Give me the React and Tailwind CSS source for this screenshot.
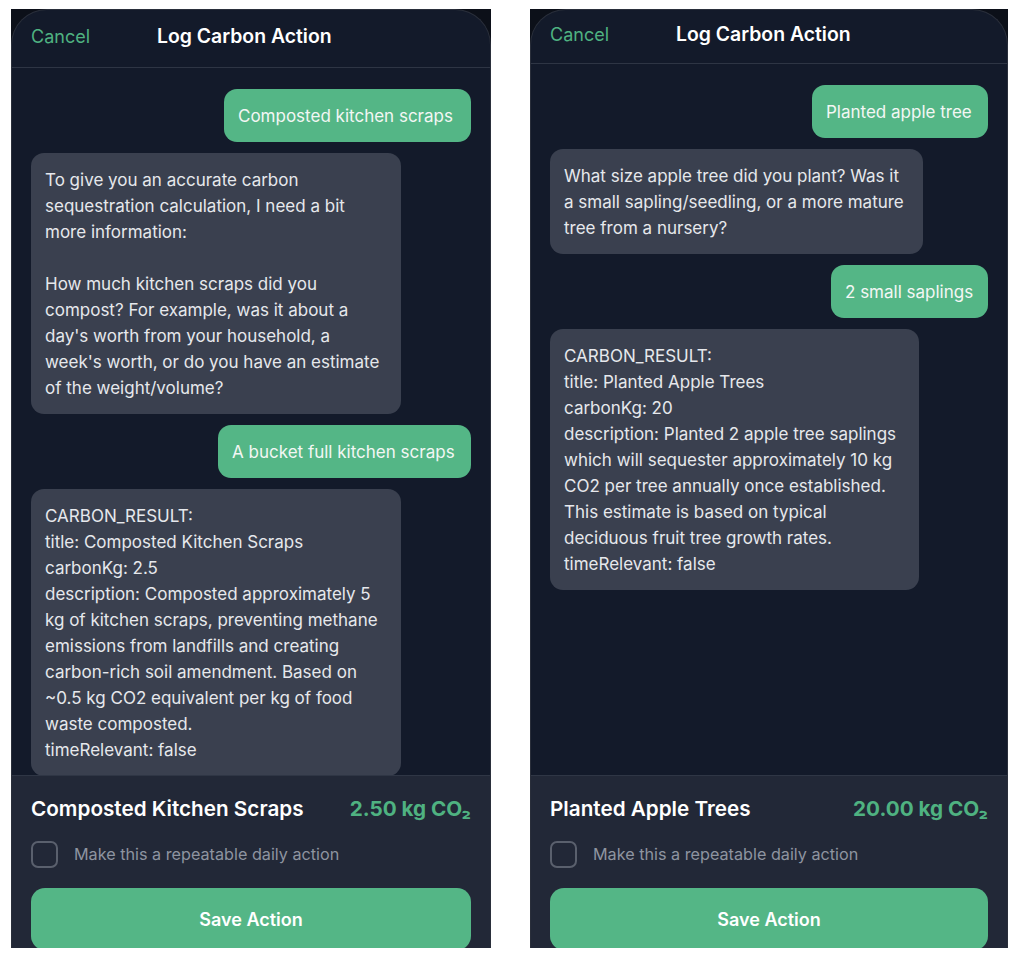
import React from "react";

const panels = [
  {
    width: "w-[480px]",
    headerH: "h-[58px]",
    actionTitle: "Composted Kitchen Scraps",
    carbon: "2.50",
    messages: [
      { from: "user", w: "w-[247px]", text: "Composted kitchen scraps" },
      {
        from: "bot",
        w: "w-[370px]",
        text:
          "To give you an accurate carbon\nsequestration calculation, I need a bit\nmore information:\n\nHow much kitchen scraps did you\ncompost? For example, was it about a\nday's worth from your household, a\nweek's worth, or do you have an estimate\nof the weight/volume?",
      },
      { from: "user", w: "w-[253px]", text: "A bucket full kitchen scraps" },
      {
        from: "bot",
        w: "w-[370px]",
        text:
          "CARBON_RESULT:\ntitle: Composted Kitchen Scraps\ncarbonKg: 2.5\ndescription: Composted approximately 5\nkg of kitchen scraps, preventing methane\nemissions from landfills and creating\ncarbon-rich soil amendment. Based on\n~0.5 kg CO2 equivalent per kg of food\nwaste composted.\ntimeRelevant: false",
      },
    ],
  },
  {
    width: "w-[478px]",
    headerH: "h-[54px]",
    actionTitle: "Planted Apple Trees",
    carbon: "20.00",
    messages: [
      { from: "user", w: "w-[176px]", text: "Planted apple tree" },
      {
        from: "bot",
        w: "w-[373px]",
        text:
          "What size apple tree did you plant? Was it\na small sapling/seedling, or a more mature\ntree from a nursery?",
      },
      { from: "user", w: "w-[157px]", text: "2 small saplings" },
      {
        from: "bot",
        w: "w-[369px]",
        text:
          "CARBON_RESULT:\ntitle: Planted Apple Trees\ncarbonKg: 20\ndescription: Planted 2 apple tree saplings\nwhich will sequester approximately 10 kg\nCO2 per tree annually once established.\nThis estimate is based on typical\ndeciduous fruit tree growth rates.\ntimeRelevant: false",
      },
    ],
  },
];

const Bubble = ({ msg }) => {
  const isUser = msg.from === "user";
  return (
    <div
      className={`${msg.w} shrink-0 rounded-[13px] pl-[14px] pr-[10px] pt-[14px] pb-[13px] text-[17px] leading-[26px] whitespace-pre-line ${
        isUser
          ? "self-end bg-[#54b686] text-[#f3f6f4]"
          : "self-start bg-[#3a404f] text-[#e6e8ec]"
      }`}
    >
      {msg.text}
    </div>
  );
};

const Panel = ({ p }) => {
  return (
    <div className={`${p.width} h-[939px] shrink-0 bg-[#0c1019]`}>
      <div className="h-full flex flex-col rounded-t-[36px] border border-b-0 border-[#2a2f3b] bg-[#131a2a] overflow-hidden">
        {/* header */}
        <div
          className={`${p.headerH} shrink-0 flex items-center gap-[67px] px-[19px] pb-[4px] border-b border-[#2e3544]`}
        >
          <span className="text-[18px] text-[#4fb281]">Cancel</span>
          <span className="text-[19.4px] font-semibold text-white">
            Log Carbon Action
          </span>
        </div>

        {/* chat */}
        <div className="flex-1 overflow-hidden px-[19px] pt-[21px] flex flex-col gap-[11px]">
          {p.messages.map((m, i) => (
            <Bubble key={i} msg={m} />
          ))}
        </div>

        {/* footer */}
        <div className="shrink-0 h-[173px] bg-[#222837] border-t border-[#2f3645] px-[19px] pt-[19px]">
          <div className="h-[28px] flex items-center justify-between">
            <span className="text-[20.7px] font-semibold text-white">
              {p.actionTitle}
            </span>
            <span className="text-[20.7px] font-bold text-[#4fb281]">
              {p.carbon} kg CO₂
            </span>
          </div>
          <div className="mt-[18px] flex items-center gap-4">
            <div className="w-[27px] h-[27px] rounded-[7px] border-2 border-[#5a606d]" />
            <span className="text-[16.2px] text-[#8e94a0]">
              Make this a repeatable daily action
            </span>
          </div>
          <button className="mt-5 w-full h-[62px] rounded-[14px] bg-[#54b686] text-[18px] font-semibold text-white">
            Save Action
          </button>
        </div>
      </div>
    </div>
  );
};

export default function App() {
  return (
    <div
      className="w-[1024px] h-[963px] bg-white flex gap-[39px] pl-[11px] pt-[9px] overflow-hidden"
      style={{ fontFamily: "Inter, 'Noto Sans', sans-serif" }}
    >
      {panels.map((p, i) => (
        <Panel key={i} p={p} />
      ))}
    </div>
  );
}
